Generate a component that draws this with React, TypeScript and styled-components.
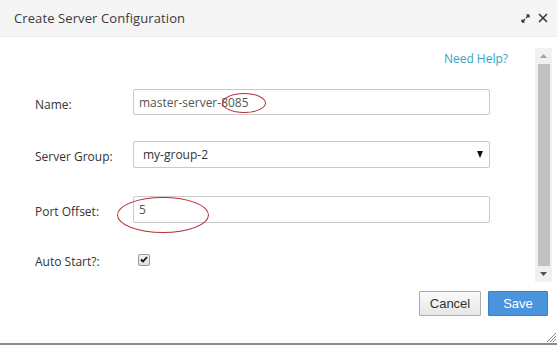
import React from "react";
import styled, { createGlobalStyle } from "styled-components";

const Global = createGlobalStyle`
  html, body { margin: 0; padding: 0; background: #fff; }
  body { width: 557px; height: 345px; overflow: hidden; font-family: "Open Sans", sans-serif; }
`;

const Dialog = styled.div`
  width: 557px;
  height: 345px;
  box-sizing: border-box;
  display: flex;
  flex-direction: column;
  background: #fff;
  border-bottom: 2px solid #8c8c8c;
  position: relative;
`;

const Header = styled.div`
  height: 37px;
  box-sizing: border-box;
  display: flex;
  align-items: center;
  justify-content: space-between;
  padding: 0 9px 0 14px;
  background: #f5f5f5;
  border-bottom: 1px solid #ececec;
`;

const Title = styled.h1`
  margin: 0;
  font-size: 13px;
  font-weight: 400;
  color: #3a3a3a;
  letter-spacing: 0.1px;
`;

const HeaderTools = styled.div`
  display: flex;
  align-items: center;
  gap: 8px;
`;

const ToolIcon = styled.svg`
  display: block;
`;

const BodyArea = styled.div`
  display: flex;
  margin-top: 11px;
  height: 234px;
`;

const Content = styled.div`
  flex: 1;
  padding: 0 0 0 35px;
  display: flex;
  flex-direction: column;
`;

const HelpRow = styled.div`
  display: flex;
  justify-content: flex-end;
  padding-right: 27px;
  height: 20px;
  align-items: center;
`;

const HelpLink = styled.a`
  font-size: 12px;
  color: #35a3c4;
  text-decoration: none;
`;

const Form = styled.div`
  display: flex;
  flex-direction: column;
  margin-top: 21px;
`;

const Row = styled.div<{ $gap: number }>`
  display: grid;
  grid-template-columns: 98px 357px;
  align-items: center;
  margin-bottom: ${(p) => p.$gap}px;
`;

const Label = styled.label`
  font-size: 12px;
  color: #333;
  padding-top: 4px;
`;

const Field = styled.div<{ $h?: number }>`
  position: relative;
  height: ${(p) => p.$h ?? 26}px;
  box-sizing: border-box;
  border: 1px solid #c9c9c9;
  border-radius: 2px;
  background: #fff;
  display: flex;
  align-items: center;
  padding-left: 5px;
  font-size: 12px;
  color: #555;
`;

const SelectField = styled(Field)`
  justify-content: space-between;
  padding-left: 9px;
  padding-right: 6px;
  color: #333;
`;

const Arrow = styled.span`
  width: 0;
  height: 0;
  border-left: 3.5px solid transparent;
  border-right: 3.5px solid transparent;
  border-top: 7px solid #111;
`;

const Ellipse = styled.span<{ $l: number; $t: number; $w: number; $h: number }>`
  position: absolute;
  left: ${(p) => p.$l}px;
  top: ${(p) => p.$t}px;
  width: ${(p) => p.$w}px;
  height: ${(p) => p.$h}px;
  border: 1px solid #b4303a;
  border-radius: 50%;
  box-sizing: border-box;
  pointer-events: none;
`;

const Check = styled.span`
  width: 12px;
  height: 12px;
  margin-left: 5px;
  box-sizing: border-box;
  border: 1px solid #9a9a9a;
  border-radius: 2px;
  background: linear-gradient(#f4f4f4, #dcdcdc);
  display: flex;
  align-items: center;
  justify-content: center;
`;

const Scrollbar = styled.div`
  width: 17px;
  margin-right: 5px;
  background: #f1f1f1;
  display: flex;
  flex-direction: column;
  align-items: center;
`;

const ScrollBtn = styled.div`
  height: 16px;
  width: 100%;
  display: flex;
  align-items: center;
  justify-content: center;
`;

const Thumb = styled.div`
  flex: 1;
  width: 12px;
  background: #c1c1c1;
`;

const Footer = styled.div`
  display: flex;
  justify-content: flex-end;
  gap: 7px;
  padding: 9px 9px 0 0;
`;

const Button = styled.button<{ $primary?: boolean }>`
  height: 25px;
  box-sizing: border-box;
  font-family: "Liberation Sans", Arial, sans-serif;
  font-size: 13px;
  padding: 0;
  border-radius: 1px;
  border: 1px solid ${(p) => (p.$primary ? "#3f7fc4" : "#adadad")};
  background: ${(p) => (p.$primary ? "#4a94dc" : "linear-gradient(#fafafa, #e6e6e6)")};
  color: ${(p) => (p.$primary ? "#fff" : "#333")};
  width: ${(p) => (p.$primary ? "60px" : "62px")};
`;

const Grip = styled.svg`
  position: absolute;
  right: 1px;
  bottom: 1px;
`;

export default function App() {
  return (
    <>
      <Global />
      <Dialog>
        <Header>
          <Title>Create Server Configuration</Title>
          <HeaderTools>
            <ToolIcon width="9" height="9" viewBox="0 0 9 9">
              <path d="M1 8 L4 5 M1 8 L1 5.5 M1 8 L3.5 8" stroke="#333" strokeWidth="1.3" fill="none" />
              <path d="M8 1 L5 4 M8 1 L5.5 1 M8 1 L8 3.5" stroke="#333" strokeWidth="1.3" fill="none" />
            </ToolIcon>
            <ToolIcon width="10" height="10" viewBox="0 0 10 10">
              <path d="M1 1 L9 9 M9 1 L1 9" stroke="#333" strokeWidth="1.5" />
            </ToolIcon>
          </HeaderTools>
        </Header>
        <BodyArea>
          <Content>
            <HelpRow>
              <HelpLink href="#">Need Help?</HelpLink>
            </HelpRow>
            <Form>
              <Row $gap={26}>
                <Label>Name:</Label>
                <Field>
                  master-server-8085
                  <Ellipse $l={88} $t={3} $w={44} $h={20} />
                </Field>
              </Row>
              <Row $gap={28}>
                <Label>Server Group:</Label>
                <SelectField $h={27}>
                  my-group-2
                  <Arrow />
                </SelectField>
              </Row>
              <Row $gap={26}>
                <Label>Port Offset:</Label>
                <Field $h={27}>
                  5
                  <Ellipse $l={-17} $t={0} $w={92} $h={36} />
                </Field>
              </Row>
              <Row $gap={0}>
                <Label>Auto Start?:</Label>
                <Check>
                  <svg width="8" height="7" viewBox="0 0 8 7">
                    <path d="M1 3.5 L3 5.5 L7 1" stroke="#111" strokeWidth="1.8" fill="none" />
                  </svg>
                </Check>
              </Row>
            </Form>
          </Content>
          <Scrollbar>
            <ScrollBtn>
              <svg width="7" height="4" viewBox="0 0 7 4"><path d="M0 4 L3.5 0 L7 4 Z" fill="#a3a3a3" /></svg>
            </ScrollBtn>
            <Thumb />
            <ScrollBtn>
              <svg width="7" height="4" viewBox="0 0 7 4"><path d="M0 0 L3.5 4 L7 0 Z" fill="#505050" /></svg>
            </ScrollBtn>
          </Scrollbar>
        </BodyArea>
        <Footer>
          <Button>Cancel</Button>
          <Button $primary>Save</Button>
        </Footer>
        <Grip width="9" height="9" viewBox="0 0 9 9">
          <path d="M0 9 L9 0 M3 9 L9 3 M6 9 L9 6" stroke="#888" strokeWidth="1" />
        </Grip>
      </Dialog>
    </>
  );
}
